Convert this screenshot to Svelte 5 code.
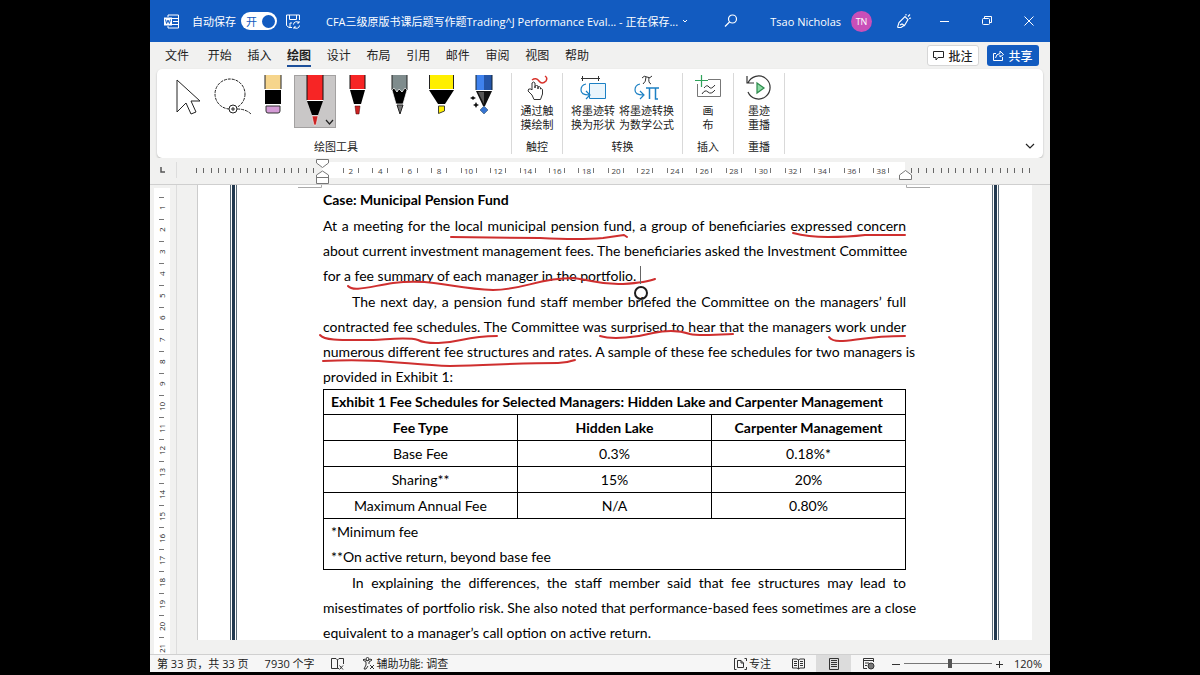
<script lang="ts">
  const tabs = ['文件', '开始', '插入', '绘图', '设计', '布局', '引用', '邮件', '审阅', '视图', '帮助'];
  let activeTab = $state('绘图');
  let autosave = $state(true);
  let zoom = $state(120);
  let tool = $state('pen-red');

  const rulerMarks = Array.from({ length: 19 }, (_, i) => (i + 1) * 2);
  const sideMarks = Array.from({ length: 21 }, (_, i) => i + 1);
  const ticks = Array.from({ length: 17 });

  const intro = [
    'At a meeting for the local municipal pension fund, a group of beneficiaries expressed concern',
    'about current investment management fees. The beneficiaries asked the Investment Committee',
    'for a fee summary of each manager in the portfolio.'
  ];
  const schedules = [
    'The next day, a pension fund staff member briefed the Committee on the managers’ full',
    'contracted fee schedules. The Committee was surprised to hear that the managers work under',
    'numerous different fee structures and rates. A sample of these fee schedules for two managers is',
    'provided in Exhibit 1:'
  ];
  const closing = [
    'In explaining the differences, the staff member said that fee structures may lead to',
    'misestimates of portfolio risk. She also noted that performance-based fees sometimes are a close',
    'equivalent to a manager’s call option on active return.'
  ];
  const fees = [
    ['Base Fee', '0.3%', '0.18%*'],
    ['Sharing**', '15%', '20%'],
    ['Maximum Annual Fee', 'N/A', '0.80%']
  ];

  const ink = [
    'M128 52L217 53Q257 55 280 53L301 50 304 52',
    'M470 48Q485 52 505 52T542 50L582 50',
    'M25 101C30 107 45 102 70 98C110 93 130 104 170 105C200 105 215 93 250 93C270 95 275 100 300 99C315 98 325 97 332 94',
    'M-3 150C2 156 20 155 50 155C70 154 85 152 95 155C105 160 125 158 138 155C152 152 162 151 174 151',
    'M0 176C60 173 85 180 127 181C170 180 200 178 235 178C242 178 246 177 252 175',
    'M277 151C290 155 315 152 330 148C345 145 358 146 367 149C375 151 390 150 410 149',
    'M506 152C508 155 512 156 517 156C530 156 545 151 582 151'
  ];
</script>

{#snippet paragraph(lines: string[], indent: boolean)}
  <p class:indent>
    {#each lines as line}
      <span class="line">{line}</span>
    {/each}
  </p>
{/snippet}

{#snippet toolButton(id: string, label: string, art: import('svelte').Snippet)}
  <button class="tool" class:selected={tool === id} aria-label={label} onclick={() => (tool = id)}>
    <svg width="42" height="53" viewBox="0 0 42 53" fill="none">{@render art()}</svg>
  </button>
{/snippet}

{#snippet cursorArt()}
  <path d="M9 5L32 26H23L28 37 23 39 18 28 9 37Z" fill="#fff" stroke="#222" />
{/snippet}
{#snippet lassoArt()}
  <circle cx="20" cy="19" r="15" stroke="#222" stroke-dasharray="3 1" />
  <circle cx="23" cy="34" r="4" fill="#fff" stroke="#222" />
  <path d="M21 34H25M23 32V36" stroke="#222" />
  <path d="M27 34Q36 34 41 39" stroke="#222" stroke-dasharray="3 1" />
{/snippet}
{#snippet eraserArt()}
  <path d="M13 0H29V14H13Z" fill="#f6d58c" />
  <path d="M13 0V14M29 0V14" stroke="#222" />
  <path d="M13 15H29V29H13Z" fill="#000" />
  <path d="M14 31H28V36Q28 38 26 38H16Q14 38 14 36Z" fill="#d49bd6" stroke="#333" />
{/snippet}
{#snippet bigPenArt()}
  <path d="M13 0H29V25H13Z" fill="#f72525" />
  <path d="M13 0V25M29 0V25" stroke="#111" />
  <path d="M13 25.500H29" stroke="#fff" />
  <path d="M13 26H29L24 40H18Z" fill="#000" />
  <path d="M18 41H24L22 50H20Z" fill="#c22" stroke="#fff" stroke-width=".5" />
  <path d="M32 45L35.500 49 39 45" stroke="#222" stroke-width="1.200" />
{/snippet}
{#snippet penArt()}
  <path d="M14 0H29V14H14Z" fill="#f72525" />
  <path d="M14 0V14M29 0V14" stroke="#111" />
  <path d="M14 15H29L25 29H18Z" fill="#000" />
  <path d="M19 31H24L23 39H20Z" fill="#c22" stroke="#400" stroke-width=".5" />
{/snippet}
{#snippet pencilArt()}
  <path d="M14 0H29V16H14Z" fill="#7f8c8d" />
  <path d="M14 0V15M29 0V15" stroke="#222" />
  <path d="M14 15L16 13 19 17 21 14 24 17 27 13 29 15 25 29H18Z" fill="#000" stroke="#fff" stroke-width=".7" />
  <path d="M19 30H25L22 39Z" fill="#777" stroke="#222" />
{/snippet}
{#snippet markerArt()}
  <path d="M9 0H34V14H9Z" fill="#ffef00" />
  <path d="M9.500 0V14M33.500 0V14" stroke="#222" />
  <path d="M9 15H34L25 29H18Z" fill="#000" />
  <path d="M18.500 31H24.500V36L18.500 38.500Z" fill="#ffef00" stroke="#443" />
{/snippet}
{#snippet magicArt()}
  <path d="M14 0H22V15H14Z" fill="#3f82ee" />
  <path d="M22 0H30V15H22Z" fill="#2455a8" />
  <path d="M14 0V15M30 0V15" stroke="#123" />
  <path d="M14 16H30L23 31H21Z" fill="#111" />
  <path d="M16 17H22V29Z" fill="#555" />
  <path d="M22 31L26 35 22 39 18 35Z" fill="#3673d0" stroke="#245" stroke-width=".5" />
  <path d="M11 21L12 22 14 23 12 24 11 25 10 24 8 23 10 22ZM14 27L15 29 17 30 15 31 14 33 13 31 11 30 13 29Z" fill="#111" />
{/snippet}

<div class="app">
  <header class="titlebar">
    <svg class="word" width="15" height="15" viewBox="0 0 15 15" fill="none" stroke="#fff">
      <path d="M4 3V1H14.500V14H4V12M8 4.500H14M9 7.500H14M8 10.500H14" />
      <path d="M0 3.500H8V11.500H0Z" fill="#fff" stroke="none" />
      <path d="M1.500 5.500L2.600 9.500 4 6 5.400 9.500 6.500 5.500" stroke="#125bc0" />
    </svg>
    <label class="autosave">
      自动保存
      <input type="checkbox" role="switch" bind:checked={autosave} />
      <span class="switch"><span>开</span><i></i></span>
    </label>
    <button class="icon save" aria-label="保存">
      <svg width="15" height="15" viewBox="0 0 15 15" fill="none" stroke="#fff">
        <path d="M6 13.500H3L.500 11.500V1H13.500V6M3.500 1V5.500H10.500V1M4 13V9H6" />
        <path d="M7.500 10.500A3 3 0 0 1 13 9V7M13 9H11M13.500 11.500A3 3 0 0 1 8 13V15M8 13H10" />
      </svg>
    </button>
    <button class="doc-name">
      CFA三级原版书课后题写作题Trading^J Performance Eval... - 正在保存...
      <svg width="6" height="4" viewBox="0 0 6 4" fill="none" stroke="#fff"><path d="M1 1L3 3 5 1" /></svg>
    </button>
    <div class="title-right">
      <button class="icon search" aria-label="搜索">
        <svg width="14" height="14" viewBox="0 0 14 14" fill="none" stroke="#fff" stroke-width="1.200">
          <circle cx="8.500" cy="5" r="4" /><path d="M5.500 8L1 12.500" />
        </svg>
      </button>
      <span class="user">Tsao Nicholas</span>
      <span class="avatar">TN</span>
      <button class="icon" aria-label="墨迹">
        <svg width="16" height="16" viewBox="0 0 16 16" fill="none" stroke="#fff" stroke-width="1.100">
          <path d="M1.500 14.500L3 9.500 9 3.500 12 6.500 8.500 12.500 6 11 4 12M1.500 14.500L5 14.500 8 12.500M10 2.500V1M12 3.500L14 1.500M13 5.500L15 5" />
        </svg>
      </button>
      <button class="icon" aria-label="最小化">
        <svg width="10" height="10" viewBox="0 0 10 10" stroke="#fff"><path d="M0 5.500H9" /></svg>
      </button>
      <button class="icon" aria-label="还原">
        <svg width="10" height="10" viewBox="0 0 10 10" fill="none" stroke="#fff">
          <rect x=".5" y="2.500" width="7" height="6" rx="1" /><path d="M2.500 2V.500H9.500V6.500H8" />
        </svg>
      </button>
      <button class="icon" aria-label="关闭">
        <svg width="10" height="10" viewBox="0 0 10 10" stroke="#fff"><path d="M.500 .500L9.500 9.500M9.500 .500L.500 9.500" /></svg>
      </button>
    </div>
  </header>

  <div class="tabbar">
    <nav>
      {#each tabs as tab}
        <button class="tab" class:active={tab === activeTab} onclick={() => (activeTab = tab)}>{tab}</button>
      {/each}
    </nav>
    <div class="actions">
      <button class="comment">
        <svg width="11" height="10" viewBox="0 0 11 10" fill="none" stroke="#222"><path d="M.500 .500H10.500V6.500H5L3 9V6.500H.500Z" /></svg>
        批注
      </button>
      <button class="share">
        <svg width="11" height="11" viewBox="0 0 11 11" fill="none" stroke="#fff"><path d="M3 3.500H.500V10.500H9.500V7M2.500 8Q3 4 7 3.500V1L10.500 4.500 7 7V5" /></svg>
        共享
      </button>
    </div>
  </div>

  <section class="ribbon">
    <div class="panel">
      <div class="group drawing">
        <div class="tools">
          {@render toolButton('select', '选择', cursorArt)}
          {@render toolButton('lasso', '套索选择', lassoArt)}
          {@render toolButton('eraser', '橡皮擦', eraserArt)}
          {@render toolButton('pen-red', '红色笔', bigPenArt)}
          {@render toolButton('pen', '笔', penArt)}
          {@render toolButton('pencil', '铅笔', pencilArt)}
          {@render toolButton('marker', '荧光笔', markerArt)}
          {@render toolButton('magic', '操作笔', magicArt)}
        </div>
        <span class="group-label">绘图工具</span>
      </div>

      <div class="group small">
        <button class="command">
          <svg width="26" height="26" viewBox="0 0 26 26" fill="none" stroke="#333">
            <path d="M8 20L4 16Q4 13 7 14L8 15V8Q9.500 6 11 8V13V11Q12.500 10 14 11V14V12Q15.500 11 16.500 12.500V14Q18 13 18.500 14.500V19L16.500 24.500H10Z" />
            <path d="M8 5Q12 2 15 6T22 6Q24 3 21 1" stroke="#d8322b" stroke-width="1.500" />
          </svg>
          通过触<br />摸绘制
        </button>
        <span class="group-label">触控</span>
      </div>

      <div class="group convert">
        <div class="commands">
          <button class="command">
            <svg width="26" height="26" viewBox="0 0 26 26" fill="none" stroke="#333">
              <path d="M1 3.500H20M2.500 1V6M18.500 1V6" />
              <path d="M9.500 8.500H25.500V23.500H9.500Z" fill="#eaf5fc" stroke="#1c80c4" />
              <path d="M6 9Q1 10 1 15T9 20M6 16L10 20 6 24" stroke="#1c80c4" stroke-width="1.200" />
            </svg>
            将墨迹转<br />换为形状
          </button>
          <button class="command">
            <svg width="26" height="26" viewBox="0 0 26 26" fill="none" stroke="#333">
              <path d="M8 3Q10 0 13 2T18 1M12 2Q12 7 9 9M15 2Q14 8 17 9" />
              <path d="M6 9Q1 10 1 15T9 20M6 16L10 20 6 24" stroke="#1c80c4" stroke-width="1.200" />
              <path d="M12 13H25M15.500 13V24M21.500 13V24H24" stroke="#1c80c4" stroke-width="1.500" />
            </svg>
            将墨迹转换<br />为数学公式
          </button>
        </div>
        <span class="group-label">转换</span>
      </div>

      <div class="group small">
        <button class="command">
          <svg width="26" height="26" viewBox="0 0 26 26" fill="none" stroke="#777">
            <path d="M13 4.500H25.500V21.500H2.500V9" />
            <path d="M6.500 0V12M0 5.500H13" stroke="#2fa35a" stroke-width="1.200" />
            <path d="M9 13Q12 9 14 12T20 10M7 19Q10 14 13 17T20 15" stroke="#333" />
          </svg>
          画<br />布
        </button>
        <span class="group-label">插入</span>
      </div>

      <div class="group small">
        <button class="command">
          <svg width="26" height="26" viewBox="0 0 26 26" fill="none" stroke="#333" stroke-width="1.200">
            <path d="M2 8A11.500 11.500 0 1 1 2 17M1 1V8H8" />
            <path d="M11 8L18 13 11 18Z" fill="#8fdca8" stroke="#2d8a4c" />
          </svg>
          墨迹<br />重播
        </button>
        <span class="group-label">重播</span>
      </div>

      <button class="collapse" aria-label="折叠功能区">
        <svg width="10" height="6" viewBox="0 0 10 6" fill="none" stroke="#222" stroke-width="1.200"><path d="M1 1L5 5 9 1" /></svg>
      </button>
    </div>
  </section>

  <div class="ruler">
    <div class="corner">
      <svg width="6" height="6" viewBox="0 0 6 6" fill="none" stroke="#555" stroke-width="1.500"><path d="M1 0V5H5" /></svg>
    </div>
    <div class="ruler-margin left">
      {#each ticks as _}<i></i>{/each}
    </div>
    <div class="ruler-scale">
      {#each rulerMarks as mark}
        <span><b>{mark}</b></span>
      {/each}
      <svg class="indent-left" width="13" height="26" viewBox="0 0 13 26" fill="#fff" stroke="#777">
        <path d="M.500 .500H12.500V4L6.500 8.500 .500 4ZM.500 24.500V16L6.500 12 12.500 16V24.500ZM.500 18.500H12.500" />
      </svg>
      <svg class="indent-right" width="13" height="10" viewBox="0 0 13 10" fill="#fff" stroke="#777">
        <path d="M.500 9.500V5L6.500 .500 12.500 5V9.500Z" />
      </svg>
    </div>
    <div class="ruler-margin right">
      {#each ticks as _}<i></i>{/each}
    </div>
  </div>

  <main class="workspace">
    <div class="side-ruler">
      <div class="side-scale">
        {#each sideMarks as mark}
          <span>{mark}</span>
        {/each}
      </div>
    </div>
    <div class="canvas">
      <article class="page">
        <div class="edge"></div>
        <div class="content">
          <h1>Case: Municipal Pension Fund</h1>
          {@render paragraph(intro, false)}
          {@render paragraph(schedules, true)}
          <table>
            <thead>
              <tr><th class="caption" colspan="3">Exhibit 1 Fee Schedules for Selected Managers: Hidden Lake and Carpenter Management</th></tr>
              <tr><th>Fee Type</th><th>Hidden Lake</th><th>Carpenter Management</th></tr>
            </thead>
            <tbody>
              {#each fees as row}
                <tr>
                  {#each row as cell}<td>{cell}</td>{/each}
                </tr>
              {/each}
              <tr><td class="notes" colspan="3">*Minimum fee<br />**On active return, beyond base fee</td></tr>
            </tbody>
          </table>
          {@render paragraph(closing, true)}

          <svg class="ink" viewBox="0 0 583 455" fill="none">
            <path d="M-25 2.500H-1.500V0M607 2.500H583.500V0" stroke="#aaa" />
            {#each ink as d}
              <path {d} stroke="#cf2f2f" stroke-width="2" stroke-linecap="round" stroke-linejoin="round" />
            {/each}
            <path d="M317.500 81V99" stroke="#666" />
            <circle cx="318" cy="108" r="6" stroke="#1c1c1c" stroke-width="2" />
          </svg>
        </div>
        <div class="edge"></div>
      </article>
    </div>
  </main>

  <footer class="statusbar">
    <span>第 33 页，共 33 页</span>
    <span class="words">7930 个字</span>
    <button class="icon proof" aria-label="校对">
      <svg width="13" height="12" viewBox="0 0 13 12" fill="none" stroke="#333"><path d="M6.500 2V10.500H.500V.500H5L6.500 2 8 .500H12.500V6M6.500 10.500H8M8.500 7.500L12 11.500M12 7.500L8.500 11.500" /></svg>
    </button>
    <button class="access">
      <svg width="13" height="13" viewBox="0 0 13 13" fill="none" stroke="#333"><circle cx="5.500" cy="2" r="1.500" /><path d="M1 3L4 5V8L2 12H4L6 9M10 3L7 5V7M1 3L2 2 5 4 9 2 10 3M8 8L12 12M12 8L8 12" /></svg>
      辅助功能: 调查
    </button>
    <div class="views">
      <button class="focus">
        <svg width="13" height="12" viewBox="0 0 13 12" fill="none" stroke="#333"><path d="M2.500 .500H.500V11.500H2.500M10.500 .500H12.500V3M12.500 9V11.500H10.500M3.500 2.500H7L9.500 5V9.500H3.500ZM7 2.500V5H9.500" /></svg>
        专注
      </button>
      <button class="view" aria-label="阅读视图">
        <svg width="13" height="12" viewBox="0 0 13 12" fill="none" stroke="#333"><path d="M6.500 1.500V11M.500 1H5L6.500 2 8 1H12.500V10H8L6.500 11 5 10H.500ZM2 3.500H5M2 5.500H5M2 7.500H5M8 3.500H11M8 5.500H11M8 7.500H11" /></svg>
      </button>
      <button class="view current" aria-label="页面视图">
        <svg width="10" height="12" viewBox="0 0 10 12" fill="none" stroke="#333"><path d="M.500 .500H9.500V11.500H.500ZM2 2.500H8M2 4.500H8M2 6.500H8M2 8.500H8" /></svg>
      </button>
      <button class="view" aria-label="Web 版式视图">
        <svg width="13" height="12" viewBox="0 0 13 12" fill="none" stroke="#333"><path d="M5 10.500H1.500V.500H11.500V4M1 2.500H11M3 5H7M3 7.500H5" /><circle cx="9" cy="8" r="3" fill="#777" /></svg>
      </button>
      <div class="zoom">
        <button class="icon step" aria-label="缩小">
          <svg width="8" height="8" viewBox="0 0 8 8" stroke="#333"><path d="M0 4.500H8" /></svg>
        </button>
        <input type="range" min="10" max="220" bind:value={zoom} aria-label="显示比例" />
        <button class="icon step" aria-label="放大">
          <svg width="8" height="8" viewBox="0 0 8 8" stroke="#333"><path d="M0 4.500H7M3.500 1V8" /></svg>
        </button>
        <span class="percent">{zoom}%</span>
      </div>
    </div>
  </footer>
</div>

<style>
  :global(body) {
    background: #000;
  }

  .app {
    box-sizing: border-box;
    display: flex;
    flex-direction: column;
    height: 100vh;
    margin: 0 12.5%;
    padding-bottom: 3px;
    overflow: hidden;
    font-family: "Open Sans", "Noto Sans CJK SC", sans-serif;
    font-size: 11px;
    color: #222;
  }

  .app > * {
    flex-shrink: 0;
  }

  button {
    padding: 0;
    border: none;
    background: none;
    font: inherit;
    color: inherit;
    white-space: nowrap;
  }

  svg {
    display: block;
  }

  .icon {
    display: flex;
    align-items: center;
    justify-content: center;
  }

  /* Title bar */
  .titlebar {
    display: flex;
    align-items: center;
    height: 42px;
    padding: 0 16px 0 14px;
    background: #125bc0;
    color: #fff;
  }

  .autosave {
    display: flex;
    align-items: center;
    gap: 5px;
    margin-left: 13px;
  }

  .autosave input {
    position: absolute;
    opacity: 0;
  }

  .switch {
    display: flex;
    align-items: center;
    justify-content: space-between;
    box-sizing: border-box;
    width: 36px;
    height: 18px;
    padding: 0 2px 0 5px;
    border-radius: 9px;
    background: #fff;
    color: #125bc0;
  }

  .switch i {
    width: 13px;
    height: 13px;
    border-radius: 50%;
    background: #125bc0;
  }

  .save {
    margin-left: 9px;
  }

  .doc-name {
    display: flex;
    align-items: center;
    gap: 4px;
    margin-left: 25px;
  }

  .title-right {
    display: flex;
    align-items: center;
    gap: 32px;
    margin-left: auto;
  }

  .user {
    margin-right: -22px;
  }

  .avatar {
    width: 21px;
    margin-right: -8px;
    border-radius: 50%;
    background: #c94fb8;
    font-size: 9px;
    line-height: 21px;
    text-align: center;
  }

  .avatar + .icon {
    margin-right: -4px;
  }

  /* Tabs */
  .tabbar {
    display: flex;
    align-items: center;
    justify-content: space-between;
    height: 27px;
    padding: 0 11px 0 15px;
    background: #f1f1f0;
  }

  nav {
    display: flex;
    justify-content: space-between;
    width: 424px;
  }

  .tab {
    height: 22px;
    border-bottom: 2px solid transparent;
    font-size: 12px;
    line-height: 22px;
  }

  .tab:first-child {
    margin-right: 3px;
  }

  .tab.active {
    border-color: #1d4f9a;
    font-weight: 700;
  }

  .actions {
    display: flex;
    gap: 8px;
  }

  .comment,
  .share {
    display: flex;
    align-items: center;
    justify-content: center;
    gap: 4px;
    box-sizing: border-box;
    width: 52px;
    height: 21px;
    border-radius: 3px;
    font-size: 12px;
    font-weight: 500;
  }

  .comment {
    border: 1px solid #d6d6d6;
    background: #fff;
  }

  .share {
    background: #125bc0;
    color: #fff;
  }

  /* Ribbon */
  .ribbon {
    padding: 0 7px;
    background: #f1f1f0;
  }

  .panel {
    display: flex;
    height: 89px;
    border-radius: 5px;
    background: #fff;
    box-shadow: 0 1px 2px rgba(0, 0, 0, 0.25);
  }

  .group {
    display: flex;
    flex-direction: column;
    align-items: center;
    justify-content: space-between;
    box-sizing: border-box;
    margin: 4px 0;
    padding-top: 2px;
    border-right: 1px solid #d9d9d9;
  }

  .drawing {
    width: 355px;
    padding: 2px 7px 0 11px;
  }

  .small {
    width: 51px;
  }

  .convert {
    width: 120px;
  }

  .tools {
    display: flex;
  }

  .tool.selected {
    background: #c9c7c7;
    box-shadow: inset 0 0 0 1px #a3a1a1;
  }

  .commands {
    display: flex;
    gap: 4px;
  }

  .command {
    line-height: 14px;
  }

  .command svg {
    margin: 0 auto 3px;
  }

  .group-label {
    line-height: 14px;
  }

  .collapse {
    align-self: flex-end;
    margin: 0 8px 9px auto;
  }

  /* Horizontal ruler */
  .ruler {
    display: flex;
    box-sizing: border-box;
    height: 27px;
    padding: 4px 0 6px;
    border-bottom: 1px solid #cfcfcf;
    background: #f1f1f0;
  }

  .corner {
    display: flex;
    align-items: center;
    justify-content: center;
    box-sizing: border-box;
    width: 27px;
    border-right: 1px solid #ddd;
  }

  .ruler-margin {
    display: flex;
    align-items: center;
    justify-content: space-between;
    box-sizing: border-box;
    width: 145px;
  }

  .ruler-margin.left {
    padding: 0 8px 0 19px;
  }

  .ruler-margin.right {
    padding: 0 20px 0 6px;
  }

  .ruler-margin i {
    width: 1px;
    height: 5px;
    background: #666;
  }

  .ruler-scale {
    position: relative;
    display: flex;
    flex: 1;
    align-items: center;
    padding: 0 9px 0 14px;
    background: #fff;
  }

  .ruler-scale span {
    display: flex;
    flex: 1;
    justify-content: center;
  }

  .ruler-scale b {
    width: 14px;
    border: solid #777;
    border-width: 0 1px;
    font-size: 8px;
    font-weight: 400;
    line-height: 5px;
    text-align: center;
    color: #444;
  }

  .indent-left {
    position: absolute;
    top: -3px;
    left: -6px;
  }

  .indent-right {
    position: absolute;
    top: 8px;
    right: -7px;
  }

  /* Document area */
  .workspace {
    display: flex;
    flex: 1 1 0;
    min-height: 0;
    background: #f1f1f0;
    overflow: hidden;
  }

  .side-ruler {
    box-sizing: border-box;
    width: 27px;
    padding: 3px 6px 0 4px;
    border-right: 1px solid #ddd;
    overflow: hidden;
  }

  .side-scale {
    padding-top: 9px;
    background: #fff;
  }

  .side-scale span {
    display: block;
    height: 22px;
    font-size: 8px;
    line-height: 16px;
    text-align: center;
    writing-mode: vertical-rl;
    transform: rotate(180deg);
    background: linear-gradient(#777, #777) center bottom / 5px 1px no-repeat;
  }

  .canvas {
    flex: 1;
    min-width: 0;
    padding: 0 18px 14px 20px;
  }

  .page {
    display: flex;
    box-sizing: border-box;
    height: 100%;
    padding: 0 33px 0 32px;
    border-left: 1px solid #ccc;
    background: #fff;
    overflow: hidden;
  }

  .edge {
    flex: none;
    width: 7px;
    background: linear-gradient(
      90deg,
      #5b6c78 1px,
      #fff 1px 2px,
      #22394f 2px 5px,
      #fff 5px 6px,
      #5b6c78 6px
    );
  }

  .content {
    position: relative;
    flex: 1;
    min-width: 0;
    padding-top: 2px;
    margin: 0 86px;
    font-family: Lato, "Open Sans", sans-serif;
    font-size: 14px;
    line-height: 25px;
    color: #000;
  }

  h1 {
    margin: 0 0 1px;
    font-size: 14px;
    line-height: 25px;
  }

  p {
    margin: 0;
  }

  p + p {
    margin-top: 1px;
  }

  .line {
    display: block;
    text-align-last: justify;
    white-space: nowrap;
  }

  .line:last-child {
    text-align-last: left;
  }

  .indent .line:first-child {
    padding-left: 29px;
  }

  table {
    width: 100%;
    border-collapse: collapse;
    table-layout: fixed;
  }

  th,
  td {
    padding: 0;
    border: 1px solid #000;
    text-align: center;
  }

  .caption,
  .notes {
    padding-left: 7px;
    text-align: left;
    white-space: nowrap;
  }

  .caption {
    line-height: 24px;
  }

  .ink {
    position: absolute;
    top: 0;
    left: 0;
    width: 100%;
    overflow: visible;
    pointer-events: none;
  }

  /* Status bar */
  .statusbar {
    display: flex;
    align-items: center;
    box-sizing: border-box;
    height: 18px;
    padding: 0 8px 0 7px;
    border-top: 1px solid #d0d0d0;
    background: #f6f6f6;
    line-height: 16px;
  }

  .words {
    margin-left: 16px;
  }

  .proof {
    margin-left: 16px;
  }

  .access {
    display: flex;
    align-items: center;
    gap: 2px;
    margin-left: 18px;
  }

  .views {
    display: flex;
    align-items: center;
    height: 100%;
    margin-left: auto;
  }

  .focus {
    display: flex;
    align-items: center;
    gap: 2px;
    margin-right: 10px;
  }

  .view {
    display: flex;
    align-items: center;
    justify-content: center;
    width: 35px;
    height: 100%;
  }

  .current {
    background: #dcdcdc;
  }

  .zoom {
    display: flex;
    align-items: center;
    margin-left: 2px;
  }

  .step {
    width: 16px;
  }

  input[type="range"] {
    appearance: none;
    width: 88px;
    height: 11px;
    margin: 0;
    background: linear-gradient(#777, #777) center / 100% 1px no-repeat;
  }

  input[type="range"]::-webkit-slider-thumb {
    appearance: none;
    width: 4px;
    height: 9px;
    background: #555;
  }

  .percent {
    margin-left: 6px;
  }
</style>
